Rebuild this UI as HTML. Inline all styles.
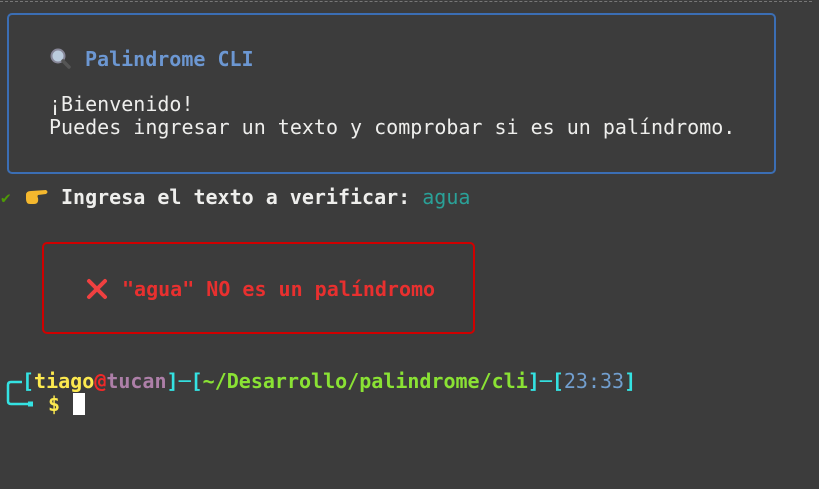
<!DOCTYPE html>
<html><head><meta charset="utf-8"><style>
body{margin:0;width:819px;height:489px;background:#3c3c3c;overflow:hidden;position:relative;font-family:"DejaVu Sans Mono","Liberation Mono",monospace;font-size:20px;color:#eeeeec}
.l{position:absolute;white-space:pre;line-height:23px;height:23px}
b{font-weight:bold}
.box{position:absolute;box-sizing:border-box;border-radius:5px}
</style></head><body>
<div style="position:absolute;left:0;top:1px;width:812px;border-top:1px dashed #777"></div>
<div class="box" style="left:7px;top:13px;width:769px;height:161px;border:2px solid #3b6eb4"></div>
<div class="box" style="left:42px;top:242px;width:433px;height:92px;border:2px solid #d00000"></div>

<svg style="position:absolute;left:49px;top:47px" width="24" height="24" viewBox="0 0 24 24"><circle cx="9" cy="9" r="6.5" fill="#bcd" stroke="#889" stroke-width="2"/><line x1="14" y1="14" x2="20" y2="20" stroke="#555" stroke-width="3.5" stroke-linecap="round"/></svg>
<div class="l" style="left:85px;top:48px;color:#6c97d2"><b>Palindrome CLI</b></div>
<div class="l" style="left:49px;top:93px">¡Bienvenido!</div>
<div class="l" style="left:49px;top:116px">Puedes ingresar un texto y comprobar si es un palíndromo.</div>

<div class="l" style="left:1px;top:186px;color:#4e9a06;font-size:16px">✔</div>
<svg style="position:absolute;left:25px;top:186px" width="24" height="22" viewBox="0 0 24 22"><path d="M1 9 Q1 5 6 5 L21 4 Q24 6 21 8 L13 9 Q12 10 13 12 Q14 18 9 18 L5 18 Q1 18 1 13Z" fill="#f5b82e"/></svg>
<div class="l" style="left:61px;top:186px"><b>Ingresa el texto a verificar:</b> <span style="color:#2aa198">agua</span></div>

<svg style="position:absolute;left:86px;top:278px" width="22" height="22" viewBox="0 0 22 22"><path d="M3 3L19 19M19 3L3 19" stroke="#f04040" stroke-width="4" stroke-linecap="round"/></svg>
<div class="l" style="left:122px;top:278px;color:#e8302f"><b>"agua" NO es un palíndromo</b></div>

<svg style="position:absolute;left:5px;top:379px" width="30" height="30" viewBox="0 0 30 30"><path d="M17 3 L6 3 Q3 3 3 6 L3 22 Q3 25 6 25 L24 25" fill="none" stroke="#34e2e2" stroke-width="2.5"/><rect x="23" y="22.5" width="5" height="5" fill="#34e2e2"/></svg>
<div class="l" style="left:22px;top:370px;color:#34e2e2"><b>[<span style="color:#fce94f">tiago</span><span style="color:#ef2929">@</span><span style="color:#ad7fa8">tucan</span>]─[<span style="color:#8ae234">~/Desarrollo/palindrome/cli</span>]─[<span style="color:#729fcf;font-weight:normal">23:33</span>]</b></div>
<div class="l" style="left:48px;top:393px;color:#fce94f"><b>$</b></div>
<div style="position:absolute;left:73px;top:393px;width:12px;height:22px;background:#fff"></div>
</body></html>
